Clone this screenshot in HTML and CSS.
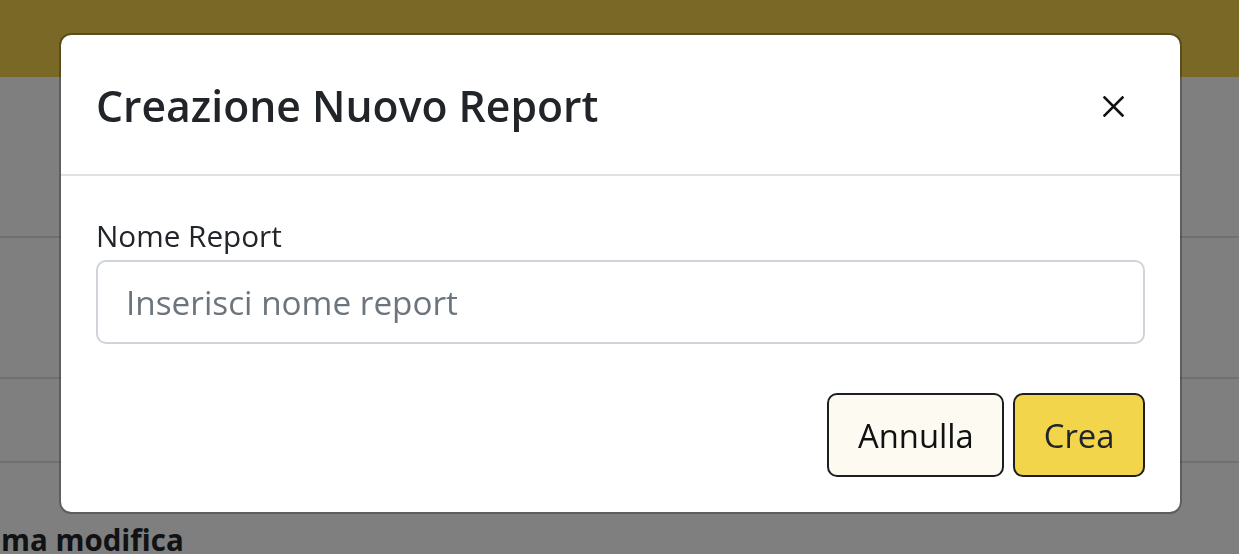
FILE: index.html
```html
<!DOCTYPE html>
<html lang="it">
<head>
<meta charset="utf-8">
<title>Creazione Nuovo Report</title>
<link rel="stylesheet" href="styles.css">
</head>
<body>
<div class="page">
  <div class="topbar"></div>
  <div class="rows">
    <div class="row row-1"></div>
    <div class="row row-2"></div>
    <div class="row row-3"></div>
  </div>
  <h2 class="section-title">ma modifica</h2>
</div>
<div class="backdrop"></div>
<div class="modal">
  <div class="modal-header">
    <h5 class="modal-title">Creazione Nuovo Report</h5>
    <button class="btn-close" type="button" aria-label="Chiudi">
      <svg width="21" height="21" viewBox="0 0 21 21"><path d="M1.5 1.5L19.5 19.5M19.5 1.5L1.5 19.5" stroke="#111" stroke-width="2.6" stroke-linecap="square" fill="none"/></svg>
    </button>
  </div>
  <div class="modal-body">
    <label class="form-label" for="nome">Nome Report</label>
    <input class="form-control" id="nome" type="text" placeholder="Inserisci nome report">
  </div>
  <div class="modal-footer">
    <button class="btn btn-cancel" type="button">Annulla</button>
    <button class="btn btn-create" type="button">Crea</button>
  </div>
</div>
</body>
</html>
```
FILE: styles.css
```css
html, body {
  margin: 0;
  padding: 0;
}
body {
  font-family: "Open Sans", "Noto Sans", sans-serif;
  color: #212529;
  background: #ffffff;
  width: 1239px;
  height: 554px;
  overflow: hidden;
}
.page {
  display: flex;
  flex-direction: column;
}
.topbar {
  height: 77px;
  background: #f4d24c;
}
.rows {
  display: flex;
  flex-direction: column;
}
.row {
  border-bottom: 2px solid #dee0e2;
}
.row-1 { height: 159px; }
.row-2 { height: 139px; }
.row-3 { height: 82px; }
.section-title {
  margin: 59px 0 0 1px;
  font-size: 29.5px;
  font-weight: 700;
  line-height: 1.2;
  color: #212529;
}
.backdrop {
  position: fixed;
  inset: 0;
  background: rgba(0, 0, 0, 0.5);
}
.modal {
  position: fixed;
  left: 59px;
  top: 33px;
  width: 1123px;
  box-sizing: border-box;
  background: #ffffff;
  background-clip: padding-box;
  border: 2px solid rgba(0, 0, 0, 0.26);
  border-radius: 12px;
  display: flex;
  flex-direction: column;
}
.modal-header {
  border-bottom: 2px solid #dee2e6;
  display: flex;
  align-items: center;
  justify-content: space-between;
  padding: 3px 56px 0 35px;
  box-sizing: content-box;
  height: 136px;
}
.modal-title {
  margin: 0;
  font-size: 42.7px;
  font-weight: 600;
  line-height: 1.2;
  color: #212529;
}
.btn-close {
  border: 0;
  background: transparent;
  padding: 0;
  width: 21px;
  height: 21px;
  display: flex;
}
.modal-body {
  padding: 37px 35px 0;
  display: flex;
  flex-direction: column;
}
.form-label {
  font-size: 29.7px;
  line-height: 46px;
  margin-bottom: 1px;
}
.form-control {
  height: 84px;
  box-sizing: border-box;
  border: 2px solid #ced4da;
  border-radius: 10px;
  padding: 0 28px;
  font-family: inherit;
  font-size: 33.3px;
  color: #212529;
  outline: none;
}
.form-control::placeholder {
  color: #6c757d;
  opacity: 1;
}
.modal-footer {
  display: flex;
  justify-content: flex-end;
  gap: 9px;
  padding: 49px 35px 35px;
}
.btn {
  height: 84px;
  box-sizing: border-box;
  border: 2px solid #1e1e1e;
  border-radius: 10px;
  padding: 0 28.5px;
  font-family: inherit;
  font-size: 32.8px;
  color: #111;
}
.btn-cancel {
  background: #fdfaf2;
}
.btn-create {
  background: #f2d54a;
  color: #212529;
}
```
